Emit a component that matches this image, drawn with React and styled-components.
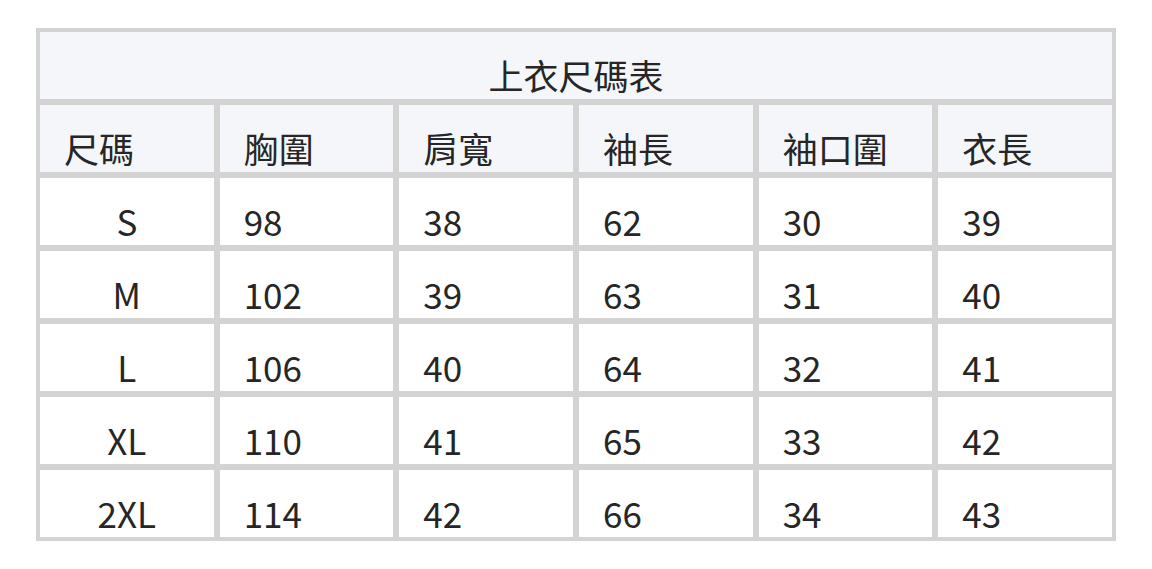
import React from "react";
import styled, { createGlobalStyle } from "styled-components";

const Global = createGlobalStyle`
  html, body { margin: 0; padding: 0; background: #ffffff; }
  body { font-family: "Noto Sans CJK TC", "Noto Sans", sans-serif; color: #262626; }
`;

const Page = styled.div`
  padding-top: 28px;
  display: flex;
  justify-content: center;
`;

const Table = styled.table`
  width: 1080px;
  table-layout: fixed;
  border-collapse: separate;
  border-spacing: 0;
  border: 1px solid #d3d3d3;
`;

const Cell = styled.td`
  box-sizing: border-box;
  height: 73px;
  border: 3px solid #d3d3d3;
  padding: 19px 0 0 ${(p) => (p.$center ? 0 : 24)}px;
  text-align: ${(p) => (p.$center ? "center" : "left")};
  vertical-align: middle;
  font-size: 35px;
  line-height: 40px;
  font-weight: 400;
  color: #262626;
  white-space: nowrap;
  background: ${(p) => (p.$head ? "#f5f6fa" : "#ffffff")};
`;

const TitleCell = styled(Cell).attrs({ as: "th" })``;

const headers = ["尺碼", "胸圍", "肩寬", "袖長", "袖口圍", "衣長"];
const rows = [
  ["S", "98", "38", "62", "30", "39"],
  ["M", "102", "39", "63", "31", "40"],
  ["L", "106", "40", "64", "32", "41"],
  ["XL", "110", "41", "65", "33", "42"],
  ["2XL", "114", "42", "66", "34", "43"],
];

export default function App() {
  return (
    <>
      <Global />
      <Page>
        <Table>
          <thead>
            <tr>
              <TitleCell colSpan={6} $head $center>
                上衣尺碼表
              </TitleCell>
            </tr>
            <tr>
              {headers.map((h) => (
                <Cell key={h} as="th" $head>
                  {h}
                </Cell>
              ))}
            </tr>
          </thead>
          <tbody>
            {rows.map((r) => (
              <tr key={r[0]}>
                {r.map((v, i) => (
                  <Cell key={i} $center={i === 0}>
                    {v}
                  </Cell>
                ))}
              </tr>
            ))}
          </tbody>
        </Table>
      </Page>
    </>
  );
}
